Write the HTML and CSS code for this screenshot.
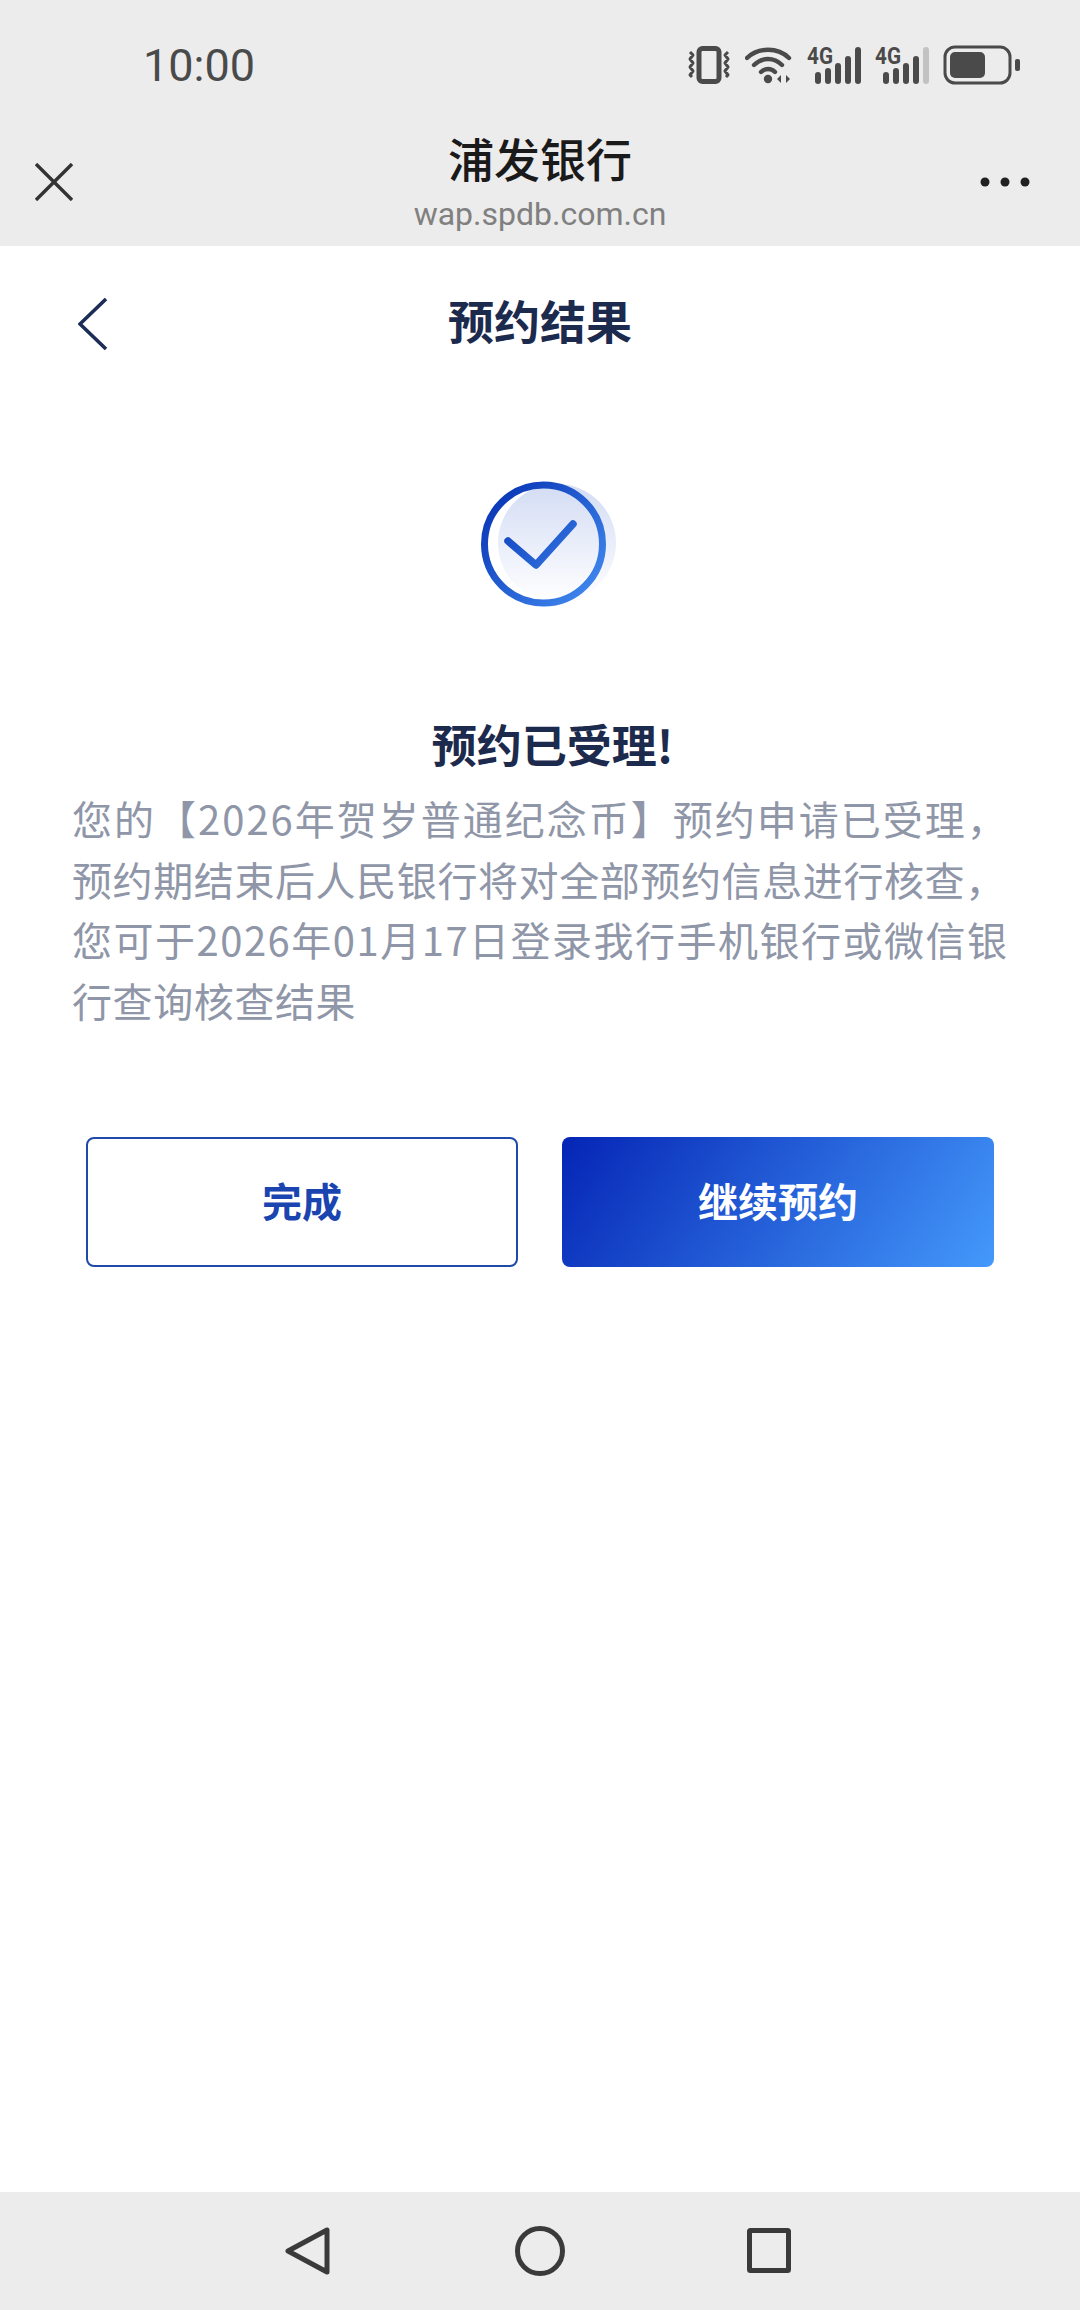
FILE: index.html
```html
<!DOCTYPE html>
<html lang="zh-CN">
<head>
    <meta charset="UTF-8">
    <meta name="viewport" content="width=device-width, initial-scale=1.0">
    <title>预约结果</title>
    <link rel="stylesheet" href="styles.css">
</head>
<body>
    <div class="top-bar">
        <div class="status-bar">
            <span class="time">10:00</span>
            <div class="status-icons">
                <!-- vibrate -->
                <svg class="icon-vibrate" width="44" height="38" viewBox="0 0 44 38" fill="none" stroke="#4a4a4a">
                    <rect x="12" y="2.5" width="20" height="33" rx="3.5" stroke-width="5"/>
                    <path d="M3 6l3 3-3 4 3 4-3 4 3 4-3 4 2 2M41 6l-3 3 3 4-3 4 3 4-3 4 3 4-2 2" stroke-width="3" stroke-linejoin="round"/>
                </svg>
                <!-- wifi -->
                <svg class="icon-wifi" width="48" height="38" viewBox="0 0 48 38" fill="none" stroke="#4a4a4a">
                    <path d="M2 12C13 1 33 1 44 12" stroke-width="4.4" stroke-linecap="round"/>
                    <path d="M9 19C17 11 29 11 37 19" stroke-width="4.4" stroke-linecap="round"/>
                    <path d="M16 26C20 22 26 22 30 26" stroke-width="4.4" stroke-linecap="round"/>
                    <circle cx="23" cy="33" r="4.2" fill="#4a4a4a" stroke="none"/>
                    <path d="M36 29v8l-4-4zM41 29v8l4-4z" fill="#4a4a4a" stroke="none"/>
                </svg>
                <!-- signal 1 -->
                <svg class="icon-signal" width="54" height="54" viewBox="0 -8 54 54">
                    <text x="0" y="18" class="net-label" textLength="26" lengthAdjust="spacingAndGlyphs">4G</text>
                    <g fill="#4a4a4a">
                        <rect x="8" y="26" width="6" height="12" rx="3"/>
                        <rect x="18" y="22" width="6" height="16" rx="3"/>
                        <rect x="28" y="17" width="6" height="21" rx="3"/>
                        <rect x="38" y="10" width="6" height="28" rx="3"/>
                        <rect x="48" y="1" width="6" height="37" rx="3"/>
                    </g>
                </svg>
                <!-- signal 2, last bar empty -->
                <svg class="icon-signal" width="54" height="54" viewBox="0 -8 54 54">
                    <text x="0" y="18" class="net-label" textLength="26" lengthAdjust="spacingAndGlyphs">4G</text>
                    <g fill="#4a4a4a">
                        <rect x="8" y="26" width="6" height="12" rx="3"/>
                        <rect x="18" y="22" width="6" height="16" rx="3"/>
                        <rect x="28" y="17" width="6" height="21" rx="3"/>
                        <rect x="38" y="10" width="6" height="28" rx="3"/>
                        <rect x="48" y="1" width="6" height="37" rx="3" fill="#c2c2c2"/>
                    </g>
                </svg>
                <!-- battery -->
                <svg class="icon-battery" width="77" height="40" viewBox="0 0 77 40">
                    <rect x="2" y="2" width="65" height="36" rx="10" fill="none" stroke="#4a4a4a" stroke-width="3"/>
                    <rect x="7" y="7" width="35" height="26" rx="5" fill="#4a4a4a"/>
                    <rect x="72" y="14" width="5" height="12" rx="2" fill="#4a4a4a"/>
                </svg>
            </div>
        </div>
        <div class="browser-bar">
            <svg class="close-icon" width="38" height="38" viewBox="0 0 38 38" fill="none" stroke="#333" stroke-width="3.4">
                <path d="M1 1l36 36M37 1L1 37"/>
            </svg>
            <div class="browser-title">
                <div class="site-name">浦发银行</div>
                <div class="site-url">wap.spdb.com.cn</div>
            </div>
            <svg class="more-icon" width="50" height="10" viewBox="0 0 50 10" fill="#222">
                <circle cx="5" cy="5" r="4.5"/>
                <circle cx="25" cy="5" r="4.5"/>
                <circle cx="45" cy="5" r="4.5"/>
            </svg>
        </div>
    </div>

    <div class="page">
        <div class="page-header">
            <svg class="back-icon" width="30" height="52" viewBox="0 0 30 52" fill="none" stroke="#1c2d56" stroke-width="3.6">
                <path d="M28 1L2 26l26 25"/>
            </svg>
            <h1>预约结果</h1>
        </div>

        <div class="result-icon">
            <svg width="160" height="160" viewBox="0 0 160 160" fill="none">
                <defs>
                    <linearGradient id="discFill" x1="0" y1="0" x2="0" y2="1">
                        <stop offset="0" stop-color="#d3dcf4"/>
                        <stop offset="1" stop-color="#ffffff"/>
                    </linearGradient>
                    <linearGradient id="ringStroke" gradientUnits="userSpaceOnUse" x1="25" y1="30" x2="135" y2="130">
                        <stop offset="0" stop-color="#0632b4"/>
                        <stop offset="1" stop-color="#4088ee"/>
                    </linearGradient>
                </defs>
                <circle cx="97" cy="79" r="59" fill="url(#discFill)"/>
                <circle cx="83.5" cy="80" r="59" stroke="url(#ringStroke)" stroke-width="7"/>
                <path d="M48 77l28 24 37-41" stroke="url(#ringStroke)" stroke-width="7.5" stroke-linecap="round" stroke-linejoin="round"/>
            </svg>
        </div>

        <h2>预约已受理!</h2>
        <p class="result-text">
            <span class="line-wide">您的【2026年贺岁普通纪念币】预约申请已受理，</span>
            <span>预约期结束后人民银行将对全部预约信息进行核查，</span>
            <span class="line-mid">您可于2026年01月17日登录我行手机银行或微信银</span>
            <span>行查询核查结果</span>
        </p>

        <div class="button-row">
            <button class="btn btn-outline">完成</button>
            <button class="btn btn-primary">继续预约</button>
        </div>
    </div>

    <div class="nav-bar">
        <svg width="60" height="60" viewBox="0 0 60 60" fill="none" stroke="#3a3a3a" stroke-width="5" stroke-linejoin="round">
            <path d="M47 9v42L8 30z"/>
        </svg>
        <svg width="60" height="60" viewBox="0 0 60 60" fill="none" stroke="#3a3a3a" stroke-width="5">
            <circle cx="30" cy="30" r="22.5"/>
        </svg>
        <svg width="60" height="60" viewBox="0 0 60 60" fill="none" stroke="#3a3a3a" stroke-width="5" stroke-linejoin="round">
            <rect x="9.5" y="9.5" width="39" height="40" rx="1"/>
        </svg>
    </div>
</body>
</html>
```

FILE: styles.css
```css
* {
    box-sizing: border-box;
}

body {
    margin: 0;
    height: 2310px;
    display: flex;
    flex-direction: column;
    background-color: #ffffff;
    font-family: "Noto Sans CJK SC", "Noto Sans", sans-serif;
}

.top-bar {
    height: 246px;
    background-color: #ececec;
}

.status-bar {
    height: 130px;
    display: flex;
    justify-content: space-between;
    align-items: center;
    padding: 0 60px 0 143px;
}

.time {
    font-family: Roboto, sans-serif;
    font-size: 45px;
    color: #4a4a4a;
}

.status-icons {
    display: flex;
    align-items: center;
    gap: 14px;
}

.net-label {
    font-family: Roboto, sans-serif;
    font-size: 24px;
    font-weight: 700;
    fill: #4a4a4a;
}

.browser-bar {
    display: grid;
    grid-template-columns: 1fr auto 1fr;
    align-items: start;
}

.close-icon {
    margin: 33px 0 0 35px;
}

.more-icon {
    justify-self: end;
    margin: 47px 50px 0 0;
}

.browser-title {
    text-align: center;
}

.site-name {
    margin-top: -3px;
    font-size: 46px;
    line-height: 60px;
    font-weight: 500;
    color: #1a1a1a;
}

.site-url {
    margin-top: 3px;
    font-family: Roboto, sans-serif;
    font-size: 32px;
    line-height: 48px;
    color: #808080;
}

.page {
    flex: 1;
}

.page-header {
    height: 152px;
    display: grid;
    grid-template-columns: 1fr auto 1fr;
    align-items: center;
}

.back-icon {
    margin: 3px 0 0 78px;
}

.page-header h1 {
    margin: 0 0 6px;
    font-size: 46px;
    font-weight: 700;
    color: #1c2a4d;
}

.result-icon {
    display: flex;
    justify-content: center;
    margin-top: 66px;
}

.page h2 {
    margin: 90px 0 0;
    padding-left: 25px;
    font-size: 45px;
    line-height: 60px;
    font-weight: 700;
    text-align: center;
    color: #1c2a4d;
}

.result-text {
    margin: 14px 0 0;
    padding-left: 72px;
    font-size: 40px;
    line-height: 60.6px;
    letter-spacing: 0.6px;
    color: #8f96a8;
}

.result-text span {
    display: block;
    white-space: nowrap;
}

.result-text .line-wide {
    letter-spacing: 2px;
}

.result-text .line-mid {
    letter-spacing: 1.5px;
}

.button-row {
    display: grid;
    grid-template-columns: 432px 432px;
    gap: 44px;
    margin-top: 107px;
    padding-left: 86px;
}

.btn {
    height: 130px;
    padding-bottom: 5px;
    border-radius: 8px;
    font-family: inherit;
    font-size: 40px;
    font-weight: 700;
}

.btn-outline {
    background-color: #ffffff;
    border: 2px solid #1f4aa8;
    color: #1a44b0;
}

.btn-primary {
    border: none;
    background: linear-gradient(125deg, #0525b5, #4499fb);
    color: #ffffff;
}

.nav-bar {
    height: 118px;
    display: flex;
    justify-content: center;
    align-items: center;
    gap: 170px;
    background-color: #ececec;
}
```
